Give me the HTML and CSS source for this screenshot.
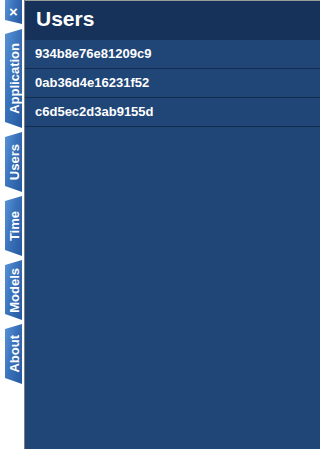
FILE: index.html
```html
<!DOCTYPE html>
<html>
<head>
<meta charset="utf-8">
<link rel="stylesheet" href="styles.css">
</head>
<body>
<div class="app">
  <nav class="tabs">
    <div class="tab tab-close"><span class="close">×</span></div>
    <div class="tab tab-app"><span class="label">Application</span></div>
    <div class="tab tab-std"><span class="label">Users</span></div>
    <div class="tab tab-std"><span class="label">Time</span></div>
    <div class="tab tab-std"><span class="label">Models</span></div>
    <div class="tab tab-std"><span class="label">About</span></div>
  </nav>
  <main class="panel">
    <header class="panel-head">Users</header>
    <ul class="list">
      <li class="row">934b8e76e81209c9</li>
      <li class="row">0ab36d4e16231f52</li>
      <li class="row">c6d5ec2d3ab9155d</li>
    </ul>
  </main>
</div>
</body>
</html>
```
FILE: styles.css
```css
html, body {
  margin: 0;
  padding: 0;
  height: 100%;
  background: #ffffff;
  font-family: "Liberation Sans", Arial, sans-serif;
}
.app {
  display: flex;
  height: 449px;
}
.tabs {
  width: 24px;
  flex: none;
  border-right: 1px solid #7c7c7c;
  background: #ffffff;
  display: flex;
  flex-direction: column;
  gap: 4px;
}
.tab {
  margin-left: 5px;
  width: 17px;
  background: linear-gradient(100deg, #5a94d6 0%, #3a72bb 45%, #245aa0 100%);
  display: flex;
  align-items: center;
  justify-content: center;
  clip-path: polygon(0 5px, 100% 0, 100% 100%, 0 calc(100% - 6px));
}
.tab-close {
  height: 24px;
  clip-path: polygon(0 0, 100% 0, 100% 100%, 0 calc(100% - 4px));
  margin-bottom: 1px;
}
.close {
  color: #ffffff;
  font-weight: bold;
  font-size: 15px;
  line-height: 1;
  margin-top: -1px;
}
.tab-app { height: 99px; }
.tab-std { height: 60px; }
.label {
  writing-mode: vertical-rl;
  transform: rotate(180deg);
  color: #ffffff;
  font-weight: bold;
  font-size: 13px;
  line-height: 13px;
  white-space: nowrap;
  margin-left: 1px;
}
.panel {
  flex: 1;
  background: #1f4677;
  border-top: 1px solid #9b9b9b;
}
.panel-head {
  height: 39px;
  background: #17325a;
  color: #ffffff;
  font-weight: bold;
  font-size: 21px;
  line-height: 36px;
  padding-left: 11px;
}
.list {
  list-style: none;
  margin: 0;
  padding: 0;
}
.row {
  height: 28px;
  line-height: 28px;
  border-bottom: 1px solid #132c4e;
  color: #ffffff;
  font-weight: bold;
  font-size: 13px;
  padding-left: 10px;
}
```
